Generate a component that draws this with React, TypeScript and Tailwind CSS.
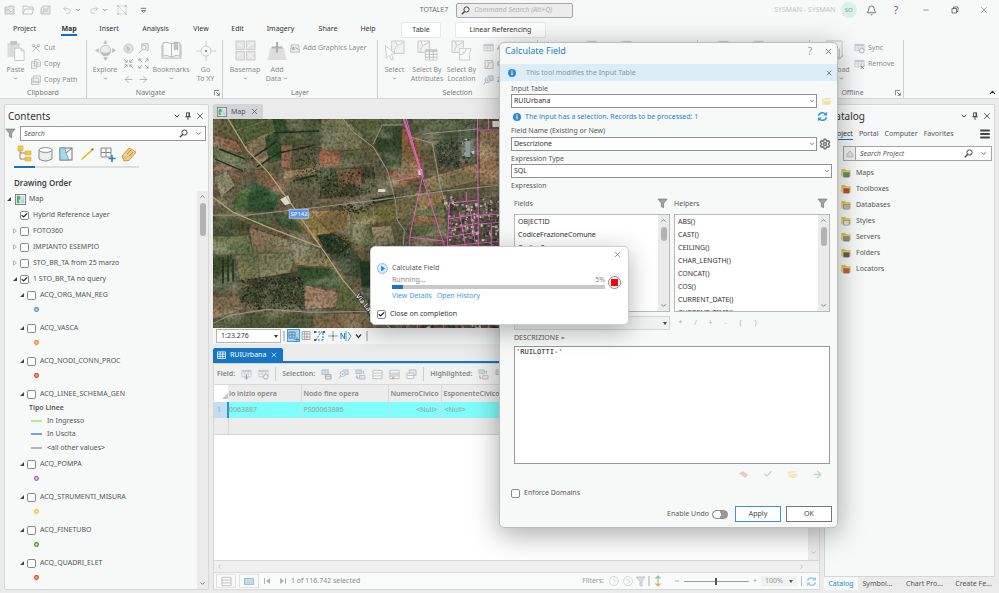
import React from "react";
import {
  ArrowLeft,
  ArrowRight,
  Bell,
  Check,
  ChevronDown,
  ChevronLeft,
  ChevronRight,
  ChevronUp,
  Menu,
  Minus,
  Redo2,
  Scissors,
  Settings,
  Undo2,
  X,
} from "lucide-react";

const menuTabs = [
  { label: "Project", width: "w-[49px]" },
  { label: "Map", width: "w-[40px]", active: true },
  { label: "Insert", width: "w-[40px]" },
  { label: "Analysis", width: "w-[53px]" },
  { label: "View", width: "w-[38px]" },
  { label: "Edit", width: "w-[35px]" },
  { label: "Imagery", width: "w-[51px]" },
  { label: "Share", width: "w-[44px]" },
  { label: "Help", width: "w-[36px]" },
];

const topLayers = [
  { name: "Hybrid Reference Layer", checked: true, arrow: "" },
  { name: "FOTO360", checked: false, arrow: "closed" },
  { name: "IMPIANTO ESEMPIO", checked: false, arrow: "closed" },
  { name: "STO_BR_TA from 25 marzo", checked: false, arrow: "closed" },
  { name: "1 STO_BR_TA no query", checked: true, arrow: "open" },
];

const pointLayers = [
  { name: "ACQ_ORG_MAN_REG", color: "#3b82d6", center: "#e6ef9a" },
  { name: "ACQ_VASCA", color: "#f07a1a", center: "#ffd9a0" },
  { name: "ACQ_NODI_CONN_PROC", color: "#d93a16", center: "#ffb09a" },
];

const lowerLayers = [
  { name: "ACQ_POMPA", color: "#a64fd6", center: "#f3e0b0" },
  { name: "ACQ_STRUMENTI_MISURA", color: "#f0c419", center: "#fff3a8" },
  { name: "ACQ_FINETUBO", color: "#3f8f1c", center: "#d4f0a0" },
  { name: "ACQ_QUADRI_ELET", color: "#d93a16", center: "#ffc09a" },
];

const lineClasses = [
  { name: "In Ingresso", color: "#8fe86b", row: "h-[13px]" },
  { name: "In Uscita", color: "#3b7ddd", row: "h-[13px]" },
  { name: "<all other values>", color: "#9a9a9a", row: "h-4" },
];

const helpers = [
  "ABS()",
  "CAST()",
  "CEILING()",
  "CHAR_LENGTH()",
  "CONCAT()",
  "COS()",
  "CURRENT_DATE()",
  "CURRENT_TIME()",
];

const fields = ["OBJECTID", "CodiceFrazioneComune", "CodiceComune"];

const catalogItems = [
  { name: "Maps", color: "#4a9e6b" },
  { name: "Toolboxes", color: "#d2452d" },
  { name: "Databases", color: "#b9bcc2" },
  { name: "Styles", color: "#dfe3e8" },
  { name: "Servers", color: "#8d9299" },
  { name: "Folders", color: "#5a5f66" },
  { name: "Locators", color: "#d9534a" },
];

/* ---------- small shared pieces ---------- */

function Checkbox({ id, checked }: { id: string; checked?: boolean }) {
  return (
    <span className="relative flex size-[9px] shrink-0">
      <input
        id={id}
        type="checkbox"
        defaultChecked={checked}
        className="peer size-[9px] appearance-none rounded-[2px] border border-[#8a8a8a] bg-white"
      />
      <Check
        strokeWidth={4}
        className="pointer-events-none absolute inset-px hidden size-[7px] text-[#222] peer-checked:block"
      />
    </span>
  );
}

function Arrow({ state }: { state: string }) {
  return (
    <svg viewBox="0 0 6 6" className="size-[6px] shrink-0">
      {state === "open" && <path d="M5 1v4H1z" fill="#444" />}
      {state === "closed" && (
        <path d="M1.5 .8v4.4L4.5 3z" fill="none" stroke="#999" strokeWidth=".7" />
      )}
    </svg>
  );
}

function Funnel() {
  return (
    <svg viewBox="0 0 12 12" className="size-[11px] shrink-0">
      <path
        d="M1 1.200h10L7.200 5.600v5L4.800 9.400V5.600z"
        fill="#a5a5a5"
        stroke="#777"
        strokeWidth=".8"
      />
    </svg>
  );
}

function Glass({ className = "size-[9px] text-[#444]" }: { className?: string }) {
  return (
    <svg viewBox="0 0 9 9" className={`shrink-0 ${className}`} fill="none" stroke="currentColor">
      <circle cx="5.500" cy="3.500" r="2.600" strokeWidth="1" />
      <path d="M3.600 5.400L.8 8.200" strokeWidth="1.400" />
    </svg>
  );
}

function MapGlyph({ className = "size-[11px]" }: { className?: string }) {
  return (
    <svg viewBox="0 0 12 12" className={`shrink-0 ${className}`}>
      <rect x=".5" y=".5" width="11" height="11" fill="#f2f2f2" stroke="#777" />
      <rect x="2" y="2" width="8" height="8" fill="#c4e4cd" />
      <path d="M2 2h3l1 3-2 2 1 3H2z" fill="#5cae77" />
      <path d="M10 5L7 7l1 3h2z" fill="#a8d5ef" />
    </svg>
  );
}

function InfoDot() {
  return (
    <svg viewBox="0 0 10 10" className="size-2 shrink-0">
      <circle cx="5" cy="5" r="5" fill="#2b8bd0" />
      <path d="M5 4.200v3.600M5 2v1.300" stroke="#fff" strokeWidth="1.400" />
    </svg>
  );
}

function FolderGlyph({ color = "#efe2a4" }: { color?: string }) {
  return (
    <svg viewBox="0 0 12 10" className="h-[9px] w-[11px] shrink-0">
      <path d="M1 9V2h3l1-1h5v2H3z" fill={color} />
      <path d="M1 9l2-5h9l-2 5z" fill={color} stroke="#fff" strokeWidth=".5" />
    </svg>
  );
}

function RefreshGlyph({ className = "" }: { className?: string }) {
  return (
    <svg viewBox="0 0 12 12" className={`size-[11px] shrink-0 ${className}`} fill="none" stroke="currentColor">
      <path d="M1.500 5Q3 1.800 6 1.800q2 0 3.500 1.600M10.500 7Q9 10.200 6 10.200q-2 0-3.500-1.600" strokeWidth="1.600" />
      <path d="M11 .8v4.200H6.800zM1 11.200V7h4.200z" fill="currentColor" stroke="none" />
    </svg>
  );
}

function PaneButtons() {
  return (
    <div className="flex items-center gap-[3px] text-[#444]">
      <button aria-label="Options">
        <ChevronDown strokeWidth={3} className="size-2" />
      </button>
      <button aria-label="Pin">
        <svg viewBox="0 0 8 8" className="size-2" fill="none" stroke="currentColor">
          <path d="M2.500 .8h3v3.700h-3zM1.200 4.800h5.600M4 5v3" strokeWidth=".9" />
          <path d="M5.200 .8v3.700" strokeWidth="1.200" />
        </svg>
      </button>
      <button aria-label="Close">
        <X className="size-[10px]" />
      </button>
    </div>
  );
}

function ScrollBar({ thumb }: { thumb: string }) {
  return (
    <div className="flex w-[11px] shrink-0 flex-col items-center justify-between bg-[#ebebeb] py-[2px] text-[#777]">
      <div className="flex flex-col items-center gap-[3px]">
        <ChevronUp strokeWidth={3} className="size-[7px]" />
        <div className={`w-[6px] rounded-full bg-[#b3b3b3] ${thumb}`} />
      </div>
      <ChevronDown strokeWidth={3} className="size-[7px]" />
    </div>
  );
}

/* ---------- title bar and ribbon ---------- */

function TitleBar() {
  return (
    <header className="flex h-5 items-center">
      <div className="flex flex-1 items-center gap-2 pl-1 text-[#c0c0c0]">
        <svg viewBox="0 0 50 12" className="h-3 w-[50px]" fill="none" stroke="currentColor">
          <path d="M1 10V3h3l1-1h5v8zM1 7l3-2 3 3 3-3" fill="#e2e2e2" />
          <path d="M19 10V2h4l1 1h5v2h-8l-2 5h9l1.500-5" />
          <path d="M37 10V5l2-3h7v8zM39 5h5V2M39 10V7h5" fill="#e8e8e8" />
        </svg>
        <div className="flex items-center gap-[3px]">
          <Undo2 className="size-[10px]" />
          <ChevronDown strokeWidth={4} className="size-[6px] text-[#888]" />
        </div>
        <div className="flex items-center gap-[3px]">
          <Redo2 className="size-[10px]" />
          <ChevronDown strokeWidth={4} className="size-[6px] text-[#888]" />
        </div>
        <svg viewBox="0 0 12 12" className="size-3" fill="none" stroke="currentColor" strokeWidth=".8">
          <path d="M2 2h8v8H2zM2 2l8 8" strokeDasharray="2 .6" />
          <path d="M1 1h2v2H1zM9 1h2v2H9zM1 9h2v2H1zM9 9h2v2H9z" fill="#ccc" stroke="none" />
        </svg>
        <svg viewBox="0 0 8 8" className="ml-1 size-[7px]" fill="none" stroke="#666">
          <path d="M1 1.500h6M1.500 4L4 6.500 6.500 4z" />
        </svg>
      </div>
      <div className="flex items-center gap-2 text-[#6e6e6e]">
        <span>TOTALE7</span>
        <label className="flex h-[15px] w-[117px] items-center gap-1 rounded-[2px] border border-[#a8a8a8] bg-[#ececec] px-1">
          <Glass />
          <input
            aria-label="Command Search"
            placeholder="Command Search (Alt+Q)"
            className="min-w-0 flex-1 bg-transparent italic placeholder:text-[#b0b0b0]"
          />
        </label>
      </div>
      <div className="flex flex-1 items-center justify-end pr-[10px] text-[#666]">
        <span className="text-[#c4c4c4]">SYSMAN - SYSMAN</span>
        <span className="ml-[5px] flex size-4 items-center justify-center rounded-full bg-[#d9f2e9] text-[6px] text-[#68a893]">
          SO
        </span>
        <button aria-label="Notifications" className="ml-[9px]">
          <Bell className="size-[11px]" />
        </button>
        <button aria-label="Help" className="ml-[17px] text-[10px]">
          ?
        </button>
        <button aria-label="Minimize" className="ml-6">
          <Minus className="size-2" />
        </button>
        <button aria-label="Restore" className="ml-[21px]">
          <svg viewBox="0 0 8 8" className="size-2" fill="none" stroke="currentColor" strokeWidth=".9">
            <path d="M1 2.500h4.500V7H1zM2.500 2.500V1H7v4.500H5.500" />
          </svg>
        </button>
        <button aria-label="Close window" className="ml-5">
          <X className="size-[10px] text-[#999]" />
        </button>
      </div>
    </header>
  );
}

function MenuBar() {
  return (
    <nav className="flex h-[19px] items-center text-[#333]">
      {menuTabs.map((tab) => (
        <button key={tab.label} className={`flex justify-center ${tab.width}`}>
          <span
            className={
              tab.active
                ? "border-b-2 border-[#0b6fc4] font-bold"
                : "border-b-2 border-transparent"
            }
          >
            {tab.label}
          </span>
        </button>
      ))}
      <button className="ml-[15px] h-4 w-10 rounded-[2px] border border-[#e6e6e6] bg-white">
        Table
      </button>
      <button className="ml-[14px] h-4 w-[91px] rounded-[2px] border border-[#e6e6e6] bg-white">
        Linear Referencing
      </button>
    </nav>
  );
}

function BigButton({
  icon,
  lines,
  menu,
  className,
}: {
  icon: React.ReactNode;
  lines: string[];
  menu?: boolean;
  className: string;
}) {
  return (
    <button className={`flex shrink-0 flex-col items-center leading-[9px] ${className}`}>
      <span className="mb-1 flex h-[21px] items-center">{icon}</span>
      {lines.map((line, i) => (
        <span key={line} className="flex items-center gap-[2px] whitespace-nowrap">
          {line}
          {menu && lines.length > 1 && i === lines.length - 1 && (
            <ChevronDown strokeWidth={4} className="size-[5px] text-[#888]" />
          )}
        </span>
      ))}
      {menu && lines.length === 1 && (
        <ChevronDown strokeWidth={4} className="mt-[2px] size-[5px] text-[#888]" />
      )}
    </button>
  );
}

function SmallButton({ icon, label }: { icon: React.ReactNode; label: string }) {
  return (
    <button className="flex h-4 items-center gap-[3px] whitespace-nowrap">
      {icon}
      {label}
    </button>
  );
}

function Group({
  title,
  width,
  launcher,
  children,
}: {
  title?: string;
  width: string;
  launcher?: boolean;
  children: React.ReactNode;
}) {
  return (
    <section className={`flex h-[58px] shrink-0 flex-col border-r border-[#cfcfcf] ${width}`}>
      <div className="flex flex-1 items-start">{children}</div>
      <div className="flex h-[10px] items-center text-[#777]">
        <span className="flex-1 text-center">{title}</span>
        {launcher && (
          <svg viewBox="0 0 8 8" className="mr-[2px] size-[6px]" fill="none" stroke="#555">
            <path d="M.5 7V.5H7M3 3l4 4M7 3.500V7H3.500" />
          </svg>
        )}
      </div>
    </section>
  );
}

function PolyIcon({ badge }: { badge: string }) {
  return (
    <svg viewBox="0 0 22 22" className="size-[21px]" fill="none" stroke="#cacaca">
      {badge === "cursor" ? (
        <>
          <path d="M8 1h13v13H8zM12 1l2 5 7-4M14 6l-3 4v4" fill="#f1f1f1" />
          <path d="M1.500 6l1 13 3-3 2.500 5 2-1-2.500-5 4-.5z" fill="#fff" />
        </>
      ) : (
        <path d="M1 1h12v12H1zM4 1l2 5 7-4M6 6l-2 4v3" fill="#f1f1f1" />
      )}
      {badge === "table" && (
        <>
          <path d="M9 10h12v11H9z" fill="#fff" />
          <path d="M9 11.500h12" strokeWidth="2.500" />
          <path d="M9 15h12M9 18h12M13 12v9M17 12v9" stroke="#b8b8b8" />
        </>
      )}
      {badge === "poly" && <path d="M9 9h12l-2 7 1 5H9zM9 16l5-2 2-5" fill="#fafafa" />}
    </svg>
  );
}

function TableGlyph({ extra }: { extra?: string }) {
  return (
    <svg viewBox="0 0 12 12" className="size-[11px] shrink-0" fill="none" stroke="#c8c8c8">
      <path d="M1 1.500h10v7H1z" fill="#f5f5f5" />
      <path d="M1 2.500h10" stroke="#bccdd6" strokeWidth="2" />
      <path d="M1 5.500h10M4.500 3v6M8 3v6" strokeWidth=".7" />
      {extra === "down" && <path d="M6 6v5M4 9l2 2 2-2" stroke="#999" />}
      {extra === "x" && <path d="M7 7l4 4M11 7l-4 4" stroke="#888" />}
      {extra === "ring" && <circle cx="8.500" cy="8.500" r="2.500" fill="#f6f6f6" stroke="#aaa" />}
    </svg>
  );
}

function RowsGlyph({ kind }: { kind: string }) {
  return (
    <svg viewBox="0 0 12 12" className="size-[11px] shrink-0" fill="none" stroke="#bdbdbd">
      {kind === "pair" && (
        <>
          <path d="M1 1h7v5H1z" fill="#c4dde8" />
          <path d="M5 6h6v5H5z" fill="#e3e3e3" stroke="#aaa" />
          <path d="M5 8h6" stroke="#aaa" strokeWidth=".7" />
        </>
      )}
      {kind === "zoom" && (
        <>
          <path d="M5 1h6v5H8" fill="#cfe2ec" />
          <circle cx="5" cy="5.500" r="2.800" fill="#f7f7f7" stroke="#a9bcc8" />
          <path d="M3 7.500L.8 10.500M3.800 5.500h2.400M5 4.300v2.400" stroke="#a9bcc8" />
        </>
      )}
      {kind === "swap" && (
        <>
          <path d="M1 1h6v4H1z" fill="#c4dde8" />
          <path d="M5 7h6v4H5z" fill="#e3e3e3" />
          <path d="M9 2v3M2 7v3h2" stroke="#999" />
        </>
      )}
      {(kind === "rows" || kind === "clear") && <path d="M1 1.500h10v9H1zM1 4.500h10M1 7.500h10" fill="#fafafa" />}
      {kind === "clear" && (
        <>
          <path d="M1 5h10v2H1z" fill="#bcdcea" stroke="none" />
          <path d="M3 8l3 3M6 8l-3 3" stroke="#d98572" />
        </>
      )}
      {kind === "stack" && (
        <>
          <path d="M3.500 1h7.500v6H3.500z" fill="#dbe9f0" />
          <path d="M1 4.500h7.500v6H1zM1 7h7.500" fill="#fafafa" />
        </>
      )}
    </svg>
  );
}

function FourArrows({ inward }: { inward?: boolean }) {
  return (
    <svg viewBox="0 0 12 12" className="size-[11px]" fill="none" stroke="#a5a5a5">
      <path d="M1 1l3.500 3.500M11 1L7.500 4.500M1 11l3.500-3.500M11 11L7.500 7.500" />
      {inward ? (
        <path d="M4.500 1.800v2.700H1.800M7.500 1.800v2.700h2.700M4.500 10.200V7.500H1.800M7.500 10.200V7.500h2.700" />
      ) : (
        <path d="M3.700 1H1v2.700M8.300 1H11v2.700M3.700 11H1V8.300M8.300 11H11V8.300" />
      )}
    </svg>
  );
}

function Ribbon() {
  return (
    <div className="flex h-[60px] border-b border-[#d8d8d8] pt-px text-[#8c8c8c]">
      <Group title="Clipboard" width="w-[87px]">
        <BigButton
          className="w-[31px]"
          menu
          lines={["Paste"]}
          icon={
            <svg viewBox="0 0 20 22" className="h-[21px] w-5">
              <path d="M1 3h13v15H1z" fill="#dcdcdc" />
              <path d="M4 1h7v4H4z" fill="#c2c2c2" />
              <path d="M8.500 8.500h7l3 3v10h-10z" fill="#fafafa" stroke="#c4c4c4" />
              <path d="M15.500 8.500v3h3" fill="none" stroke="#c4c4c4" />
            </svg>
          }
        />
        <div>
          <SmallButton icon={<Scissors className="size-[10px] rotate-90 text-[#aaa]" />} label="Cut" />
          <SmallButton
            label="Copy"
            icon={
              <svg viewBox="0 0 11 11" className="size-[10px]" fill="#f2f2f2" stroke="#bdbdbd">
                <path d="M.5 3h6v7.500h-6zM4 .5h4l2.500 2.500v5H4z" />
                <path d="M2 5h3M2 7h3M6 4h3M6 6h3" strokeWidth=".6" />
              </svg>
            }
          />
          <SmallButton
            label="Copy Path"
            icon={
              <svg viewBox="0 0 11 11" className="size-[10px]" fill="#f2f2f2" stroke="#bdbdbd">
                <path d="M2.500 1h8v7h-8zM.5 3.500h8v7h-8z" />
                <path d="M2 6.500v2M4.500 6.500v2M7 6.500v2" />
              </svg>
            }
          />
        </div>
      </Group>
      <Group title="Navigate" width="w-[136px]" launcher>
        <BigButton
          className="w-[36px]"
          menu
          lines={["Explore"]}
          icon={
            <svg viewBox="0 0 22 22" className="size-[21px]" fill="#bdbdbd">
              <path d="M11 0l2.500 4h-5zM11 22l2.500-4h-5zM0 11l4-2.500v5zM22 11l-4-2.500v5z" />
              <circle cx="11" cy="11" r="5.500" fill="#ececec" stroke="#bbb" />
              <path d="M6 12q5 3 10 0a5 5 0 0 1-10 0z" />
            </svg>
          }
        />
        <div className="grid w-[26px] shrink-0 grid-cols-2 gap-x-1 text-[#b0b0b0]">
          <span className="flex h-4 items-center">
            <svg viewBox="0 0 12 12" className="size-[11px]" fill="#e2e2e2" stroke="#c4c4c4">
              <circle cx="6" cy="6" r="5" />
              <path d="M3 3l3 1 2 3-3 3-1-3z" fill="#c4c4c4" stroke="none" />
            </svg>
          </span>
          <span className="flex h-4 items-center">
            <svg viewBox="0 0 12 12" className="size-[11px]" fill="none" stroke="#b0b0b0">
              <path d="M4 1h7v7H9M4 1v2M5 6.500L1 11" />
              <circle cx="6.500" cy="5" r="2.500" />
            </svg>
          </span>
          <span className="flex h-[15px] items-center">
            <FourArrows inward />
          </span>
          <span className="flex h-[15px] items-center">
            <FourArrows />
          </span>
          <span className="flex h-4 items-center">
            <ArrowLeft className="size-[11px]" />
          </span>
          <span className="flex h-4 items-center">
            <ArrowRight className="size-[11px]" />
          </span>
        </div>
        <BigButton
          className="w-[44px]"
          menu
          lines={["Bookmarks"]}
          icon={
            <svg viewBox="0 0 22 20" className="h-[19px] w-[21px]" fill="#f8f8f8" stroke="#b5b5b5">
              <path d="M11 3Q6 0 2 2v14q4-2 9 1 5-3 9-1V2q-4-2-9 1zM11 3v14" />
              <path d="M1 4v14h20V4" fill="none" />
              <path d="M14 1.500h3.500v8l-1.700-1.700L14 9.500z" fill="#c4c4c4" />
            </svg>
          }
        />
        <BigButton
          className="w-[25px]"
          lines={["Go", "To XY"]}
          icon={
            <svg viewBox="0 0 20 20" className="size-5" fill="none" stroke="#cacaca">
              <circle cx="10" cy="10" r="5" />
              <path d="M10 0v5M10 15v5M0 10h5M15 10h5" />
              <circle cx="10" cy="10" r="1.200" fill="#999" stroke="none" />
            </svg>
          }
        />
      </Group>
      <Group title="Layer" width="w-[155px]">
        <BigButton
          className="w-[44px]"
          menu
          lines={["Basemap"]}
          icon={
            <svg viewBox="0 0 22 22" className="size-[21px]" fill="#e4e4e4" stroke="#cacaca">
              <path d="M1 1h9v9H1zM12 1h9v9h-9zM1 12h9v9H1zM12 12h9v9h-9z" />
              <path d="M3 4l5 3M13 8l3-4 4-1M2 18l4-4 3 3M13 14l7 6M14 19l5-6" stroke="#fafafa" />
            </svg>
          }
        />
        <BigButton
          className="mr-[3px] w-5"
          menu
          lines={["Add", "Data"]}
          icon={
            <svg viewBox="0 0 20 20" className="size-5">
              <path d="M3 7h14l2.500 12H.5z" fill="#dedede" />
              <path d="M10 1v11M4.500 6.500h11" stroke="#b0b0b0" strokeWidth="2" />
            </svg>
          }
        />
        <SmallButton
          label="Add Graphics Layer"
          icon={
            <svg viewBox="0 0 11 9" className="h-[9px] w-[10px]" fill="#ececec" stroke="#bbb">
              <path d="M1.500 .5h8l1 8H.5z" />
              <path d="M3 5.500h1.500v-2H3zM6 3.500l3 2" stroke="#999" />
            </svg>
          }
        />
      </Group>
      <Group title="Selection" width="w-[160px]">
        <BigButton className="w-[33px]" menu lines={["Select"]} icon={<PolyIcon badge="cursor" />} />
        <BigButton className="w-[32px]" lines={["Select By", "Attributes"]} icon={<PolyIcon badge="table" />} />
        <BigButton className="mr-[3px] w-[37px]" lines={["Select By", "Location"]} icon={<PolyIcon badge="poly" />} />
        <div>
          <SmallButton icon={<TableGlyph />} label="Attributes" />
          <SmallButton
            label="Clear"
            icon={
              <svg viewBox="0 0 11 11" className="size-[11px]" fill="#f1f1f1" stroke="#c4c4c4">
                <path d="M2 1.500h8v8H2zM4 1.500l2 3 4-2M6 4.500l-2 5" />
              </svg>
            }
          />
          <SmallButton icon={<RowsGlyph kind="zoom" />} label="Zoom To" />
        </div>
      </Group>
      <Group title="Inquiry" width="w-[160px]">
        <div className="flex gap-6 pl-12">
          <TableGlyph />
          <TableGlyph />
        </div>
      </Group>
      <Group title="Labeling" width="w-[112px]">
        <div className="flex gap-6 pl-5">
          <TableGlyph />
          <TableGlyph />
        </div>
      </Group>
      <Group title="Offline" width="w-[94px]" launcher>
        <BigButton
          className="mr-[2px] ml-1 w-[38px]"
          menu
          lines={["Download", "Map"]}
          icon={
            <svg viewBox="0 0 22 22" className="size-[21px]" fill="none" stroke="#c4c4c4">
              <path d="M3 1h17v15" />
              <path d="M17 9v11M13 16l4 4 4-4" strokeWidth="1.500" />
            </svg>
          }
        />
        <div>
          <SmallButton icon={<TableGlyph extra="ring" />} label="Sync" />
          <SmallButton icon={<TableGlyph extra="x" />} label="Remove" />
        </div>
      </Group>
      <button aria-label="Collapse ribbon" className="ml-auto self-end pr-[2px] pb-px text-[#222]">
        <ChevronUp strokeWidth={3} className="size-[9px]" />
      </button>
    </div>
  );
}

/* ---------- contents pane ---------- */

function Bullet({ color, center }: { color: string; center: string }) {
  return (
    <div className="flex h-[17px] items-start pt-1 pl-[29px]">
      <svg viewBox="0 0 6 6" className="size-[5px]">
        <circle cx="3" cy="3" r="2.200" fill={center} stroke={color} strokeWidth="1.500" />
      </svg>
    </div>
  );
}

function LayerRow({ name }: { name: string }) {
  return (
    <div className="flex h-4 items-center gap-[2px] pl-[14px]">
      <Arrow state="open" />
      <Checkbox id={name} />
      <label htmlFor={name} className="pl-[2px]">
        {name}
      </label>
    </div>
  );
}

function ContentsPane() {
  return (
    <aside className="flex w-[205px] shrink-0 flex-col overflow-hidden rounded-[2px] border border-[#d6d6d6] bg-[#f7f9f9]">
      <div className="flex h-[21px] items-center justify-between pr-[3px] pl-[3px]">
        <h2 className="text-[10px] text-[#333]">Contents</h2>
        <PaneButtons />
      </div>
      <div className="flex items-center gap-1 pr-[2px]">
        <Funnel />
        <label className="flex h-[15px] flex-1 items-center border border-[#999] bg-white px-[3px]">
          <input
            aria-label="Search"
            placeholder="Search"
            className="min-w-0 flex-1 italic placeholder:text-[#555]"
          />
          <Glass className="mr-[7px] size-[9px] text-[#444]" />
          <ChevronDown strokeWidth={3} className="size-[7px] text-[#555]" />
        </label>
      </div>
      <div className="mx-[9px] flex h-[27px] w-[125px] items-center border-b-2 border-[#dedede]">
        <svg viewBox="0 0 125 18" className="h-[18px] w-[125px]" fill="none">
          <path d="M6 4v10M6 8h5M6 14h5" stroke="#888" />
          <path d="M4 1h5v5H4zM11 6h6v4h-6zM11 12h6v4h-6z" fill="#ecc94b" stroke="#d6ae2a" strokeWidth=".6" />
          <path d="M25 5v9q6 4 13 0V5" fill="#eee" stroke="#888" />
          <ellipse cx="31.500" cy="5" rx="6.500" ry="2.400" fill="#fff" stroke="#888" />
          <rect x="46" y="3" width="12" height="12" fill="#f5f5f5" stroke="#777" />
          <path d="M46 3h5l1 5 3 7h-9z" fill="#9bdcf2" stroke="#777" strokeWidth=".6" />
          <path d="M52 8l6-5" stroke="#777" />
          <path d="M67 15.500l1-2.500 9.500-8.500 1.200 1L69.200 14z" fill="#e3b82c" />
          <path d="M77 4.500l1.500-1.300 1.300 1-1.400 1.400z" fill="#8a4b3a" />
          <path d="M87 3h10v9H87zM92 3v9M87 7.500h10" stroke="#888" />
          <path d="M98 10v7M94.500 13.500h7" stroke="#2a7fb5" strokeWidth="1.600" />
          <path d="M108 11l7-8 7 4-7 8.500-5 .5z" fill="#f0cf7c" stroke="#b48a2f" strokeWidth=".8" />
          <path d="M113 9l4-4M115 11l4-4" stroke="#9a7426" strokeWidth=".7" />
          <circle cx="111" cy="13" r="1" fill="#fff" stroke="#888" strokeWidth=".5" />
        </svg>
      </div>
      <div className="mx-[9px] -mt-[2px] h-[2px] w-[21px] bg-[#1173c1]" />
      <h3 className="flex h-[23px] items-end pb-[2px] pl-[9px] text-[8px] leading-[13px] font-semibold text-[#444]">
        Drawing Order
      </h3>
      <div className="flex min-h-0 flex-1">
        <div className="min-w-0 flex-1">
          <div className="flex h-4 items-center gap-[3px] pl-px">
            <Arrow state="open" />
            <MapGlyph />
            <span>Map</span>
          </div>
          {topLayers.map((layer) => (
            <div key={layer.name} className="flex h-4 items-center gap-[2px] pl-[7px]">
              <Arrow state={layer.arrow} />
              <Checkbox id={layer.name} checked={layer.checked} />
              <label htmlFor={layer.name} className="pl-[2px]">
                {layer.name}
              </label>
            </div>
          ))}
          {pointLayers.map((layer) => (
            <div key={layer.name}>
              <LayerRow name={layer.name} />
              <Bullet color={layer.color} center={layer.center} />
            </div>
          ))}
          <LayerRow name="ACQ_LINEE_SCHEMA_GEN" />
          <div className="flex h-3 items-center pl-6 font-semibold">Tipo Linee</div>
          {lineClasses.map((line) => (
            <div key={line.name} className={`flex items-center gap-[5px] pl-[26px] ${line.row}`}>
              <svg viewBox="0 0 11 2" className="h-[2px] w-[11px]">
                <path d="M0 1h11" stroke={line.color} strokeWidth="1.400" />
              </svg>
              {line.name}
            </div>
          ))}
          {lowerLayers.map((layer) => (
            <div key={layer.name}>
              <LayerRow name={layer.name} />
              <Bullet color={layer.color} center={layer.center} />
            </div>
          ))}
        </div>
        <ScrollBar thumb="h-[33px]" />
      </div>
    </aside>
  );
}

/* ---------- aerial map ---------- */

const parcels: [string, string][] = [
  ["0,0 18,0 34,30 0,18", "#6a6343"],
  ["18,0 60,0 66,14 32,26", "#56643c"],
  ["0,16 24,22 30,34 0,30", "#8f6a50"],
  ["0,28 30,36 38,50 0,46", "#5c6c44"],
  ["0,44 24,48 32,60 10,76 0,70", "#80614a"],
  ["0,58 14,52 22,66 8,78", "#a39a7c"],
  ["30,28 52,14 68,26 48,46", "#8d7b5b"],
  ["52,18 66,14 70,40 56,44", "#2f4e2c"],
  ["68,24 78,26 78,50 68,48", "#946a50"],
  ["62,0 108,0 106,26 68,26", "#4e5538"],
  ["60,0 72,0 74,12 62,14", "#2b4a2b"],
  ["108,0 132,0 150,16 148,30 108,30", "#857f5c"],
  ["106,32 128,32 126,48 106,46", "#a3593f"],
  ["128,32 150,30 158,44 126,48", "#646546"],
  ["78,28 106,28 104,64 80,62", "#5b5b40"],
  ["72,52 102,48 102,56 70,60", "#a98461"],
  ["40,50 58,52 74,66 66,74 44,64", "#8a6b4e"],
  ["38,62 66,76 60,92 34,92", "#1f4a28"],
  ["24,74 38,66 34,92 20,92", "#4a6b3a"],
  ["106,50 160,48 164,74 104,80", "#43462f"],
  ["124,50 148,50 148,66 124,64", "#80593f"],
  ["164,8 188,6 188,48 172,46 162,28", "#35482f"],
  ["189,8 206,16 208,50 188,48", "#94663a"],
  ["134,0 190,0 188,6 168,7 160,24", "#5f6643"],
  ["196,0 264,0 264,18 222,22 198,16", "#4f583d"],
  ["222,24 244,18 246,50 226,46", "#434c3c"],
  ["244,8 262,4 262,44 246,44", "#646c58"],
  ["266,12 287,12 287,66 266,66", "#a88561"],
  ["174,52 208,48 208,60 182,70", "#955f42"],
  ["210,60 264,44 264,62 214,74", "#a8865f"],
  ["182,80 210,74 206,92 184,100", "#80734d"],
  ["96,92 138,90 140,108 118,114 100,104", "#967446"],
  ["136,92 182,84 184,102 150,106 140,118", "#78703f"],
  ["138,104 160,106 164,130 134,124", "#556039"],
  ["60,94 76,96 90,114 66,106", "#3b5733"],
  ["34,98 58,98 62,108 40,104", "#5c6b44"],
  ["76,94 96,92 118,114 104,124", "#9d854f"],
  ["0,98 20,98 38,106 34,118 0,116", "#4c4f33"],
  ["0,118 36,116 40,134 0,134", "#6b794c"],
  ["36,108 74,120 78,134 40,134", "#907a5a"],
  ["0,134 22,134 24,164 0,176", "#41512f"],
  ["24,136 46,134 46,160 26,162", "#7c7b52"],
  ["46,134 78,134 80,144 74,162 46,160", "#8b8962"],
  ["78,124 108,130 120,148 82,146", "#a18c67"],
  ["104,116 120,114 138,126 134,136 114,134", "#2e3d27"],
  ["118,138 138,128 148,142 150,158 132,156", "#44523a"],
  ["146,142 158,142 160,190 150,176", "#1f3d24"],
  ["84,148 120,150 134,170 92,166", "#34552c"],
  ["92,166 128,174 126,188 90,190", "#ab8469"],
  ["24,162 88,152 92,190 50,190 26,180", "#41452f"],
  ["0,178 26,176 30,190 0,200", "#98775a"],
  ["128,164 148,182 158,192 122,190", "#696b3e"],
  ["0,200 54,192 100,194 98,209 0,209", "#545b3b"],
  ["100,194 158,194 176,209 100,209", "#856e50"],
  ["158,108 178,106 182,124 162,128", "#b39a7c"],
  ["198,86 230,80 234,118 200,116", "#687447"],
  ["200,74 228,72 230,82 208,92", "#a18153"],
  ["200,96 232,98 232,104 200,108", "#926b49"],
];

const roads = [
  "M15 0 34 31 55 53 79 86 105 124 112 134 130 161 147 181 177 209",
  "M0 78 20 93 50 106 107 128",
];

const lanes = [
  "M0 96 34 96 97 89 180 79 230 72 287 66",
  "M130 0 140 13 160 28 174 51 182 81 184 101 191 111 190 126",
  "M160 25 169 6 190 6",
  "M193 6 197 18 219 24 227 68 234 91",
  "M0 204 17 196 54 190 97 193 160 192",
  "M209 15 264 10M176 63 207 57",
];

const utilityLines = [
  "M190 0 231 126M193 0 209 58 197 114 196 126M191 0 210 58",
  "M197 118 232 122M264 0 265 127M264 11H287M275 0V11",
  "M236 84 264 81M236 84 234 127M234 100 264 95M235 110 264 104M233 118 264 113",
  "M246 93 252 127M257 92 262 125M253 73V82M233 127 287 122",
  "M265 96 287 95M265 105 287 103M278 104V127M204 204V209M230 204V209M247 204 250 209M262 204V209M275 204V209",
];

// deterministic scatter so the built-up blocks look the same on every render
function scatter(count: number, x: number, y: number, w: number, h: number, seed: number) {
  let s = seed * 7919;
  const next = () => {
    s = (s * 16807) % 2147483647;
    return s / 2147483647;
  };
  return Array.from({ length: count }, () => ({
    x: x + next() * w,
    y: y + next() * h,
    w: 1 + next() * 2,
    h: 1 + next() * 2,
    t: next(),
  }));
}

const trees = [
  ...scatter(160, 106, 52, 56, 26, 11),
  ...scatter(420, 28, 158, 62, 32, 29),
  ...scatter(80, 80, 30, 26, 34, 47),
  ...scatter(90, 222, 22, 22, 26, 83),
  ...scatter(90, 106, 116, 30, 22, 97),
  ...scatter(90, 124, 84, 34, 10, 61),
];

const houses = [
  ...scatter(110, 234, 84, 30, 40, 7),
  ...scatter(90, 266, 78, 21, 46, 19),
  ...scatter(24, 244, 18, 14, 24, 5),
  ...scatter(14, 228, 76, 14, 8, 37),
  ...scatter(60, 190, 203, 97, 6, 53),
];

function AerialMap() {
  return (
    <svg
      viewBox="0 0 606 209"
      preserveAspectRatio="xMinYMin slice"
      className="h-[209px] w-full bg-[#695f45]"
      role="img"
      aria-label="Aerial map"
    >
      <defs>
        <filter id="grain" x="0" y="0" width="100%" height="100%">
          <feTurbulence type="fractalNoise" baseFrequency="0.35" numOctaves="3" seed="4" />
          <feColorMatrix values="0 0 0 0 0  0 0 0 0 0  0 0 0 0 0  1.600 0 0 0 -0.600" />
        </filter>
        <filter id="patches" x="0" y="0" width="100%" height="100%">
          <feTurbulence type="fractalNoise" baseFrequency="0.03 0.05" numOctaves="3" seed="9" />
          <feColorMatrix values="0 0 0 0 0.850  0 0 0 0 0.740  0 0 0 0 0.560  0 2.400 0 0 -1.100" />
        </filter>
        <filter id="shade" x="0" y="0" width="100%" height="100%">
          <feTurbulence type="fractalNoise" baseFrequency="0.02 0.04" numOctaves="2" seed="21" />
          <feColorMatrix values="0 0 0 0 0.080  0 0 0 0 0.120  0 0 0 0 0.060  0 2.600 0 0 -1.100" />
        </filter>
      </defs>
      {parcels.map(([points, fill], i) => (
        <polygon key={i} points={points} fill={fill} stroke="#3d3b28" strokeWidth=".4" />
      ))}
      <rect width="606" height="209" filter="url(#patches)" opacity=".5" />
      <rect width="606" height="209" filter="url(#shade)" opacity=".6" />
      <path
        d="M10 138v26M15 136v26M20 140v22M160 80l22-4 0 3-22 5zM60 14l46-2M66 34l36-8M80 62l24-6M2 40l28 12M6 30l26 10M38 40l26-18M44 48l24-16"
        stroke="#26331f"
        strokeWidth="1.500"
        fill="none"
      />
      <path
        d="M0 24l26 9M2 50l26 8M34 24l28-12M22 12l36-12M108 30h40M126 48l34-4M106 50v28M78 26v36M46 134v28M40 118l40 6M136 92v26M160 84v40M0 118h36M0 134h44"
        stroke="#a39672"
        strokeWidth=".5"
        fill="none"
      />
      <rect x="233" y="78" width="54" height="48" fill="#5b5647" opacity=".7" />
      {trees.map((t, i) => (
        <rect
          key={i}
          x={t.x}
          y={t.y}
          width={1.3}
          height={1.3}
          fill={t.t > 0.25 ? "#1c2617" : "#8a7a5c"}
          opacity=".75"
        />
      ))}
      <rect width="606" height="209" filter="url(#grain)" opacity=".5" />
      {houses.map((h, i) => (
        <rect
          key={i}
          x={h.x}
          y={h.y}
          width={h.w}
          height={h.h}
          fill={h.t > 0.7 ? "#c9c4ba" : h.t > 0.35 ? "#8b7c70" : "#30362a"}
        />
      ))}
      <path d="M205 50h4v6h-4zM165 70h7v3h-7zM279 2h8v6h-8zM67 80l8-4 3 8-6 2z" fill="#ddd8cd" />
      <path d="M252 22h5v16h-5z" fill="#8f9a9e" />
      {roads.map((d) => (
        <path key={d} d={d} fill="none" stroke="#b3a67c" strokeWidth="1.200" />
      ))}
      {lanes.map((d) => (
        <path key={d} d={d} fill="none" stroke="#9c9a90" strokeWidth=".9" />
      ))}
      {utilityLines.map((d) => (
        <path key={d} d={d} fill="none" stroke="#ea62cf" strokeWidth=".9" />
      ))}
      <rect x="76" y="90" width="19" height="9" fill="#5b93e8" stroke="#dfe9fb" strokeWidth=".6" />
      <text x="86" y="97" textAnchor="middle" fontSize="6" fill="#fff">
        SP142
      </text>
      <text
        transform="translate(142 177) rotate(50)"
        fontSize="7"
        fontWeight="600"
        fill="#fff"
        stroke="#222"
        strokeWidth="1.500"
        paintOrder="stroke"
      >
        Via Latiano
      </text>
    </svg>
  );
}

/* ---------- centre: map view and attribute table ---------- */

function MapStatusBar() {
  return (
    <div className="flex h-4 items-center gap-1 bg-[#f4f5f5] pl-[3px]">
      <select aria-label="Scale" className="h-[14px] w-[65px] appearance-none border border-[#b5b5b5] bg-white px-1 text-[#333]">
        <option>1:23.276</option>
      </select>
      <svg viewBox="0 0 4 3" className="pointer-events-none -ml-[11px] h-[3px] w-1">
        <path d="M0 0h4L2 3z" fill="#333" />
      </svg>
      <svg viewBox="0 0 86 14" className="ml-px h-[14px] w-[86px]" fill="none" stroke="#999">
        <path d="M1 2v10" />
        <rect x="4.500" y=".5" width="12" height="12" fill="#a8d4f2" stroke="#4a9bd0" />
        <path d="M6 3h6v6H6zM9 3v6M6 6h6M14 8v5M11.500 10.500h5" stroke="#4478a0" strokeWidth=".8" />
        <path d="M19 2.500h8v8h-8zM21.500 2.500v8M24 2.500v8M19 5h8M19 8h8" strokeWidth=".8" />
        <path d="M32 3h9M32 11h9M33 11l5-8M40 4v7" stroke="#3b82b0" strokeDasharray="2 1" />
        <path d="M31 2h2v2h-2zM40 2h2v2h-2zM31 10h2v2h-2z" fill="#555" stroke="none" />
        <path d="M45 7h10M50 2v10" stroke="#999" />
        <rect x="49" y="6" width="2" height="2" fill="#5db85d" stroke="none" />
        <path d="M58 10V4l3.500 6V4" stroke="#1f87cc" />
        <path d="M63 2v10M65 3l3 4-3 5" stroke="#5a9cc5" />
        <path d="M73 5.500l2.500 3 2.500-3" stroke="#333" strokeWidth="1.200" />
        <path d="M84 2v10" />
      </svg>
    </div>
  );
}

function AttributeTable() {
  return (
    <section className="flex min-h-0 flex-1 flex-col">
      <div className="flex border-b-2 border-[#1477c6]">
        <div className="flex h-[13px] w-[70px] items-center gap-1 rounded-t-[2px] bg-[#1477c6] pl-1 text-white">
          <svg viewBox="0 0 10 9" className="h-2 w-[9px] shrink-0" fill="none" stroke="#fff" strokeWidth=".9">
            <path d="M.5 1h9v7.500h-9zM.5 3.500h9M.5 6h9M3.500 1v7.500M6.500 1v7.500" />
          </svg>
          RUIUrbana
          <X className="size-2 shrink-0" />
        </div>
      </div>
      <div className="flex h-[22px] shrink-0 items-center gap-[6px] overflow-hidden border border-[#d8d8d8] bg-[#f0f1f1] pl-[3px] text-[#858585]">
        <span className="font-semibold">Field:</span>
        <TableGlyph extra="down" />
        <TableGlyph extra="ring" />
        <span className="h-[14px] w-px bg-[#cfcfcf]" />
        <span className="font-semibold">Selection:</span>
        <RowsGlyph kind="pair" />
        <RowsGlyph kind="zoom" />
        <RowsGlyph kind="swap" />
        <RowsGlyph kind="rows" />
        <RowsGlyph kind="clear" />
        <RowsGlyph kind="stack" />
        <span className="h-[14px] w-px bg-[#cfcfcf]" />
        <span className="font-semibold">Highlighted:</span>
        <RowsGlyph kind="swap" />
        <RowsGlyph kind="pair" />
        <RowsGlyph kind="stack" />
      </div>
      <div className="flex min-h-0 flex-1 border border-t-0 border-[#d8d8d8] bg-white">
        <div className="min-w-0 flex-1 overflow-hidden">
          <table className="w-full table-fixed border-collapse text-left text-[#9a9a9a]">
            <colgroup>
              <col className="w-[14px]" />
              <col className="w-[73px]" />
              <col className="w-[87px]" />
              <col className="w-[53px]" />
              <col />
            </colgroup>
            <thead>
              <tr className="h-[17px] bg-[#ececec] text-[#858585]">
                <th className="bg-white">
                  <svg viewBox="0 0 6 6" className="mt-1 ml-auto size-[6px]">
                    <path d="M6 0v6H0z" fill="#c4c4c4" />
                  </svg>
                </th>
                <th className="border-r border-[#d6d6d6] pl-px font-semibold whitespace-nowrap">lo inizio opera</th>
                <th className="border-r border-[#d6d6d6] pl-[2px] font-semibold">Nodo fine opera</th>
                <th className="border-r border-[#d6d6d6] text-center font-semibold">NumeroCivico</th>
                <th className="pl-[2px] font-semibold">EsponenteCivico</th>
              </tr>
            </thead>
            <tbody>
              <tr className="h-4 bg-[#80fdfd]">
                <td className="border-r-2 border-[#3b8fc9] bg-[#c3ddf3] pl-[3px]">1</td>
                <td className="border-r border-[#c9dede]">0063887</td>
                <td className="border-r border-[#c9dede] pl-[2px]">PS00063886</td>
                <td className="border-r border-[#c9dede] pr-[3px] text-right">&lt;Null&gt;</td>
                <td className="pl-[3px]">&lt;Null&gt;</td>
              </tr>
              <tr className="h-4 border-b border-[#d6d6d6] bg-[#ececec]">
                <td className="border-r border-[#d6d6d6]" />
                <td colSpan={4} />
              </tr>
            </tbody>
          </table>
        </div>
        <div className="flex w-[11px] items-end justify-center bg-[#ececec] pb-1 text-[#bbb]">
          <ChevronDown strokeWidth={3} className="size-[7px]" />
        </div>
      </div>
      <div className="flex h-[11px] shrink-0 items-center justify-between border-x border-[#d8d8d8] bg-[#f0f0f0] pr-[14px] pl-[2px] text-[#bbb]">
        <ChevronLeft strokeWidth={3} className="size-[7px]" />
        <ChevronRight strokeWidth={3} className="size-[7px]" />
      </div>
      <div className="flex h-[18px] shrink-0 items-center border border-[#d8d8d8] bg-[#f9fafa] px-[2px] text-[#8a8a8a]">
        <button aria-label="Show all records" className="flex h-[14px] w-5 items-center justify-center border border-[#e2e2e2]">
          <RowsGlyph kind="rows" />
        </button>
        <button aria-label="Show selected records" className="ml-[3px] flex h-[14px] w-5 items-center justify-center border border-[#e2e2e2]">
          <span className="h-[7px] w-[10px] border border-[#9fc0d0] bg-[#bcdcea]" />
        </button>
        <svg viewBox="0 0 24 8" className="mx-1 h-2 w-6" fill="#b0b0b0">
          <path d="M1 1h1v6H1zM7 1v6L3 4zM17 1v6l4-3zM22 1h1v6h-1z" />
        </svg>
        <span>1 of 116.742 selected</span>
        <div className="ml-auto flex items-center gap-1 text-[#999]">
          <span>Filters:</span>
          <svg viewBox="0 0 42 12" className="h-3 w-[42px]" fill="none" stroke="#d3d9dc">
            <circle cx="6" cy="6" r="4.500" />
            <path d="M6 3v3h2.500" />
            <circle cx="20" cy="6" r="4.500" />
            <path d="M18 4l4 2-3 3" />
            <path d="M28 2h9l-3 4v5h-2V6z" fill="#dcdfe0" stroke="#c6c9ca" />
            <path d="M41 1v10" stroke="#aaa" />
          </svg>
          <svg viewBox="0 0 8 12" className="h-3 w-2" fill="none" strokeWidth="1.200">
            <path d="M4 6V1M1.500 3.500L4 1l2.500 2.500" stroke="#8cc69a" />
            <path d="M4 6v5M1.500 8.500L4 11l2.500-2.500" stroke="#e5a96b" />
          </svg>
          <Minus strokeWidth={3} className="ml-2 size-[6px]" />
          <input
            type="range"
            aria-label="Zoom"
            className="h-[7px] w-[65px] appearance-none bg-[linear-gradient(#999,#999)] bg-[length:100%_1px] bg-center bg-no-repeat [&::-webkit-slider-thumb]:h-[7px] [&::-webkit-slider-thumb]:w-[2px] [&::-webkit-slider-thumb]:appearance-none [&::-webkit-slider-thumb]:bg-[#555]"
          />
          <span>+</span>
          <label className="flex w-9 items-center justify-between bg-[#f0f1f1] px-1">
            <select aria-label="Zoom level" className="appearance-none">
              <option>100%</option>
            </select>
            <svg viewBox="0 0 4 3" className="h-[3px] w-1 shrink-0">
              <path d="M0 0h4L2 3z" fill="#555" />
            </svg>
          </label>
          <span className="h-[10px] w-px bg-[#bbb]" />
          <RefreshGlyph className="text-[#9ccbe4]" />
        </div>
      </div>
    </section>
  );
}

function CenterPane() {
  return (
    <main className="flex min-w-0 flex-1 flex-col">
      <div className="flex h-[15px] w-[50px] items-center gap-1 rounded-t-[2px] bg-[#d3d4d8] pl-1 text-[#555]">
        <MapGlyph className="size-[10px]" />
        Map
        <X className="size-[9px]" />
      </div>
      <AerialMap />
      <MapStatusBar />
      <div className="h-1" />
      <AttributeTable />
    </main>
  );
}

/* ---------- catalog pane ---------- */

function CatalogPane() {
  return (
    <aside className="flex w-[171px] shrink-0 flex-col">
      <div className="flex flex-1 flex-col border border-[#d6d6d6] bg-[#f7f9f9]">
        <div className="flex h-[21px] items-center justify-between pr-[2px] pl-1">
          <h2 className="text-[10px] text-[#333]">Catalog</h2>
          <PaneButtons />
        </div>
        <div className="flex h-4 items-center gap-[6px] pr-[3px] pl-[5px]">
          <button className="border-b border-[#1477c6] text-[#333]">Project</button>
          <button>Portal</button>
          <button>Computer</button>
          <button>Favorites</button>
          <Menu strokeWidth={4} className="ml-auto size-3 text-[#444]" />
        </div>
        <div className="mt-1 mr-[2px] ml-[18px] flex h-[15px] border border-[#a5a5a5] bg-white">
          <span className="flex w-3 shrink-0 items-center justify-center border-r border-[#a5a5a5] bg-[#f3f3f3]">
            <svg viewBox="0 0 8 8" className="size-2" fill="#ddd" stroke="#aaa" strokeWidth=".7">
              <path d="M1 4l3-3 3 3v3H1z" />
            </svg>
          </span>
          <label className="flex min-w-0 flex-1 items-center px-1">
            <input
              aria-label="Search Project"
              placeholder="Search Project"
              className="min-w-0 flex-1 italic placeholder:text-[#555]"
            />
            <Glass className="mr-[7px] size-[9px] text-[#444]" />
            <ChevronDown strokeWidth={3} className="size-[7px] text-[#555]" />
          </label>
        </div>
        <ul className="pt-1">
          {catalogItems.map((item) => (
            <li key={item.name} className="flex h-4 items-center gap-[5px] pl-4">
              <svg viewBox="0 0 11 11" className="size-[10px]">
                <path d="M.5 1h4l1 1.500h5V9H.5z" fill="#e0c040" />
                <path d="M.5 3.500h10V9H.5z" fill="#ecd56a" />
                <rect x="3" y="5" width="6" height="5" fill={item.color} stroke="#777" strokeWidth=".6" />
              </svg>
              {item.name}
            </li>
          ))}
        </ul>
      </div>
      <div className="flex h-[13px] items-center">
        <button className="h-full w-[34px] bg-[#f7f9f9] text-[#1b86d1]">Catalog</button>
        <button className="w-[39px]">Symbol...</button>
        <button className="w-[55px]">Chart Pro...</button>
        <button className="flex-1 whitespace-nowrap">Create Fe...</button>
      </div>
    </aside>
  );
}

/* ---------- calculate field window ---------- */

function ComboBox({ id, value }: { id: string; value: string }) {
  return (
    <div className="relative flex-1">
      <select
        id={id}
        className="block h-[14px] w-full appearance-none border border-[#919191] bg-white px-[2px] text-[#333]"
      >
        <option>{value}</option>
      </select>
      <ChevronDown
        strokeWidth={3}
        className="pointer-events-none absolute top-1 right-[2px] size-[6px] text-[#555]"
      />
    </div>
  );
}

function ListBox({ title, items, thumb }: { title: string; items: string[]; thumb: string }) {
  return (
    <div className="flex-1">
      <div className="flex h-[21px] items-center justify-between pr-[2px]">
        {title}
        <Funnel />
      </div>
      <div className="flex h-[98px] overflow-hidden border border-[#b9b9b9] bg-white text-[#333]">
        <ul className="flex-1">
          {items.map((item) => (
            <li key={item} className="flex h-[13px] items-center pl-[3px]">
              {item}
            </li>
          ))}
        </ul>
        <ScrollBar thumb={thumb} />
      </div>
    </div>
  );
}

function CalculateField() {
  return (
    <div
      role="dialog"
      aria-label="Calculate Field"
      className="absolute top-[42px] left-[499px] w-[339px] rounded-[5px] border border-[#bdbdbd] bg-[#f7f9f9] text-[#5a5a5a] shadow-[0_6px_28px_rgba(0,0,0,0.35)]"
    >
      <div className="flex h-[21px] items-center pr-1 pb-[5px] pl-[5px]">
        <h1 className="text-[9px] text-[#1b82cc]">Calculate Field</h1>
        <button aria-label="Help" className="mr-3 ml-auto text-[10px] text-[#999]">
          ?
        </button>
        <button aria-label="Close">
          <X className="size-[9px] text-[#555]" />
        </button>
      </div>
      <div className="flex h-[17px] items-center bg-[#ddedf8] pr-1 pl-2 text-[#8a949b]">
        <InfoDot />
        <span className="ml-[10px]">This tool modifies the Input Table</span>
        <X className="ml-auto size-2 text-[#555]" />
      </div>
      <div className="pr-[5px] pl-[11px]">
        <label htmlFor="input-table" className="flex h-[13px] items-end">
          Input Table
        </label>
        <div className="flex items-center gap-1">
          <ComboBox id="input-table" value="RUIUrbana" />
          <FolderGlyph />
        </div>
        <div className="flex h-[17px] items-center gap-1 pr-1 pl-[2px] text-[#1f83c8]">
          <InfoDot />
          The input has a selection. Records to be processed: 1
          <RefreshGlyph className="ml-auto text-[#2d9ad8]" />
        </div>
        <label htmlFor="field-name" className="flex h-3 items-center">
          Field Name (Existing or New)
        </label>
        <div className="flex items-center gap-[2px] pr-px">
          <ComboBox id="field-name" value="Descrizione" />
          <Settings strokeWidth={3} className="size-3 text-[#777]" />
        </div>
        <label htmlFor="expression-type" className="flex h-[13px] items-end">
          Expression Type
        </label>
        <div className="flex">
          <ComboBox id="expression-type" value="SQL" />
        </div>
        <div className="flex h-[15px] items-center">Expression</div>
        <div className="pr-[2px] pl-[3px]">
          <div className="flex gap-1">
            <ListBox title="Fields" items={fields} thumb="h-[14px]" />
            <ListBox title="Helpers" items={helpers} thumb="h-[19px]" />
          </div>
          <div className="mt-1 flex gap-1 text-[#b0b0b0]">
            <div className="flex flex-1 items-center border border-[#d4d4d4] bg-[#f0f1f1] pr-[2px]">
              <select aria-label="Insert Values" disabled className="h-3 flex-1 appearance-none">
                <option>Insert Values</option>
              </select>
              <svg viewBox="0 0 4 3" className="h-[3px] w-1">
                <path d="M0 0h4L2 3z" fill="#444" />
              </svg>
            </div>
            <div className="flex flex-1 items-center gap-[11px] pl-[5px]">
              {["*", "/", "+", "-", "(", ")"].map((op) => (
                <button key={op} disabled className="w-1">
                  {op}
                </button>
              ))}
            </div>
          </div>
          <label htmlFor="expression" className="flex h-4 items-center">
            DESCRIZIONE =
          </label>
          <textarea
            id="expression"
            defaultValue="'RUILOTTI-'"
            className="block h-[118px] w-full resize-none border border-[#999] bg-white px-px font-['DejaVu_Sans_Mono'] text-[7px] text-[#222]"
          />
          <div className="flex h-5 items-center justify-end gap-[14px] pr-[7px]">
            <svg viewBox="0 0 12 10" className="h-[9px] w-[11px]">
              <path d="M1 4l4-3 6 4-3 4z" fill="#f2c4c0" />
            </svg>
            <Check strokeWidth={3} className="size-[10px] text-[#bcdcc2]" />
            <FolderGlyph color="#f1e9b8" />
            <ArrowRight strokeWidth={3} className="size-[11px] text-[#bcdcc2]" />
          </div>
        </div>
        <div className="flex h-[18px] items-center gap-1">
          <Checkbox id="enforce" />
          <label htmlFor="enforce">Enforce Domains</label>
        </div>
        <div className="flex items-center justify-end pt-1 pb-[5px]">
          <label htmlFor="undo">Enable Undo</label>
          <input
            id="undo"
            type="checkbox"
            role="switch"
            className="ml-[3px] h-[9px] w-4 appearance-none rounded-full border border-[#8a8a8a] bg-[#999] bg-[radial-gradient(circle_at_4px_50%,#fff_4px,transparent_4px)]"
          />
          <button className="ml-[7px] h-4 w-[46px] border border-[#3a92db] bg-white text-[#444]">Apply</button>
          <button className="ml-[5px] h-4 w-[46px] border border-[#777] bg-white text-[#444]">OK</button>
        </div>
      </div>
    </div>
  );
}

function ProgressWindow() {
  return (
    <div
      role="dialog"
      aria-label="Progress"
      className="absolute top-[246px] left-[370px] w-[259px] rounded-[5px] border border-[#cfcfcf] bg-white px-[6px] pb-[5px] text-[#5a5a5a] shadow-[0_6px_24px_rgba(0,0,0,0.3)]"
    >
      <button aria-label="Close progress" className="ml-auto block pt-[3px]">
        <X className="size-[9px] text-[#777]" />
      </button>
      <div className="flex items-center gap-1 pt-[2px]">
        <svg viewBox="0 0 12 12" className="size-[11px]">
          <circle cx="6" cy="6" r="5.400" fill="#d9ecfa" stroke="#7fb9e2" />
          <path d="M4.500 3v6L9 6z" fill="#2584cb" />
        </svg>
        <span className="leading-[14px]">Calculate Field</span>
      </div>
      <div className="flex items-center gap-[3px] pr-px pl-[15px]">
        <div className="flex-1">
          <div className="flex justify-between leading-[10px] text-[#888]">
            <span>Running...</span>
            <span>5%</span>
          </div>
          <div className="h-1 bg-[#c9c9c9]">
            <div className="h-1 bg-[#1477c6]" style={{ width: "5%" }} />
          </div>
        </div>
        <button aria-label="Stop" className="flex size-[13px] items-center justify-center rounded-full border border-[#888] bg-white">
          <span className="size-[7px] bg-[#f00]" />
        </button>
      </div>
      <div className="flex gap-[5px] pt-px pl-[15px] leading-[11px] text-[#3b9ad6]">
        <a href="#details">View Details</a>
        <a href="#history">Open History</a>
      </div>
      <div className="mt-2 flex items-center gap-1 text-[#333]">
        <Checkbox id="close-on-completion" checked />
        <label htmlFor="close-on-completion">Close on completion</label>
      </div>
    </div>
  );
}

export default function App() {
  return (
    <div className="relative flex h-screen w-full flex-col overflow-hidden bg-[#f7f9f9] font-['Noto_Sans','Open_Sans',sans-serif] text-[7px] leading-[10px] text-[#555]">
      <TitleBar />
      <MenuBar />
      <Ribbon />
      <div className="flex min-h-0 flex-1 gap-1 bg-[#ebebeb] px-1 pt-[5px] pb-[3px]">
        <ContentsPane />
        <CenterPane />
        <CatalogPane />
      </div>
      <CalculateField />
      <ProgressWindow />
    </div>
  );
}
